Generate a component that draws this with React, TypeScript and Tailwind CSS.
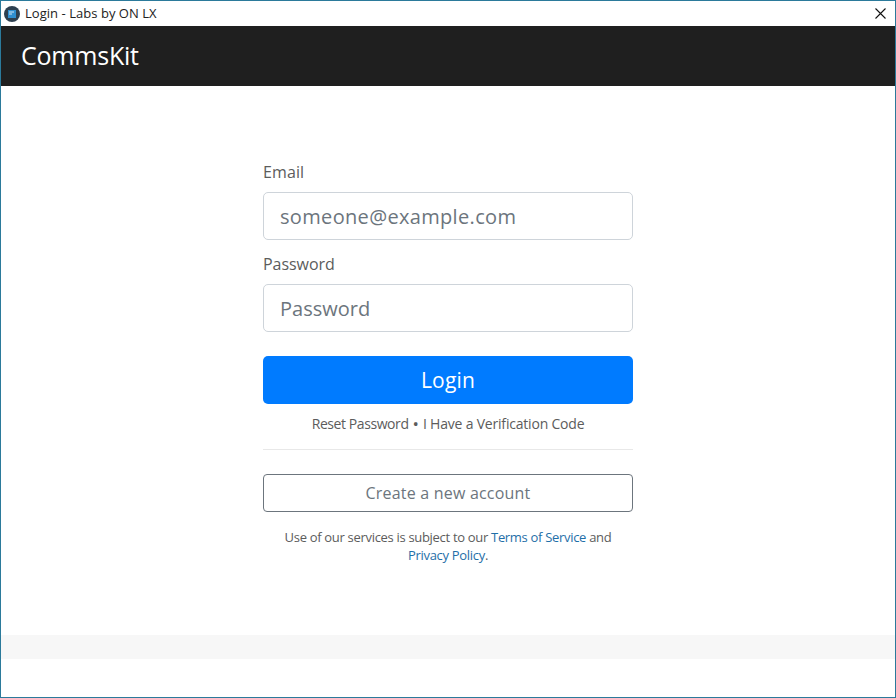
export default function App() {
  return (
    <div className="h-[698px] w-[896px] flex flex-col border border-[#2b7a9b] bg-white overflow-hidden font-['Open_Sans','Noto_Sans',sans-serif]">
      <div className="h-[25px] shrink-0 flex items-center bg-white pl-[3px]">
        <svg width="16" height="16" viewBox="0 0 16 16" className="shrink-0">
          <circle cx="8" cy="8" r="8" fill="#2e4050" />
          <rect x="4" y="4" width="8" height="8" fill="#2f8fd0" />
          <rect x="5" y="5.5" width="5" height="1" fill="#cfe6f5" />
          <rect x="5" y="7.5" width="3" height="1" fill="#cfe6f5" />
        </svg>
        <span className="ml-[5px] text-[13px] tracking-[0.04px] text-[#222] leading-none">Login - Labs by ON LX</span>
        <svg width="11" height="11" viewBox="0 0 11 11" className="ml-auto mr-[9px] mb-[1px]">
          <path d="M0.5 0.5 L10.5 10.5 M10.5 0.5 L0.5 10.5" stroke="#111" strokeWidth="1.1" fill="none" />
        </svg>
      </div>
      <div className="h-[60px] shrink-0 flex items-center bg-[#1f1f1f] pl-5">
        <span className="text-[25px] leading-none text-white tracking-[-0.22px] mb-[1px]">CommsKit</span>
      </div>
      <main className="flex-1 pt-[74px] flex flex-col items-center">
        <div className="w-[370px] flex flex-col">
          <label className="text-[16px] leading-6 text-[#5c5c5c] mb-2 tracking-[0.1px]">Email</label>
          <input placeholder="someone@example.com" className="h-12 rounded-[5px] border border-[#ced4da] px-4 text-[20px] tracking-[0.33px] placeholder:text-[#6c757d] mb-3" />
          <label className="text-[16px] leading-6 text-[#5c5c5c] mb-2 tracking-[-0.05px]">Password</label>
          <input placeholder="Password" className="h-12 rounded-[5px] border border-[#ced4da] px-4 text-[20px] tracking-[0.02px] placeholder:text-[#6c757d] mb-6" />
          <button className="h-12 pt-[2px] rounded-[5px] bg-[#007bff] text-white text-[21px] tracking-[0.2px]">Login</button>
          <div className="mt-2 flex justify-center text-[14px] leading-6 text-[#5c5c5c]">
            <span className="tracking-[-0.42px]">Reset Password</span>
            <span className="mx-[4px] text-[17px]">•</span>
            <span className="tracking-[-0.2px]">I Have a Verification Code</span>
          </div>
          <hr className="mt-[13px] mb-6 border-t border-[#e8e8e8]" />
          <button className="h-[38px] rounded-[4px] border border-[#6c757d] text-[#6c757d] text-[16px] tracking-[0.2px]">Create a new account</button>
          <p className="mt-4 text-center text-[13px] leading-[18px] text-[#5c5c5c] tracking-[-0.31px]">
            Use of our services is subject to our <a className="text-[#1f6fa8]">Terms of Service</a> and<br />
            <a className="text-[#1f6fa8]">Privacy Policy</a>.
          </p>
        </div>
      </main>
      <div className="h-[24px] shrink-0 bg-[#f7f7f7]" />
      <div className="h-[38px] shrink-0 bg-white" />
    </div>
  );
}
